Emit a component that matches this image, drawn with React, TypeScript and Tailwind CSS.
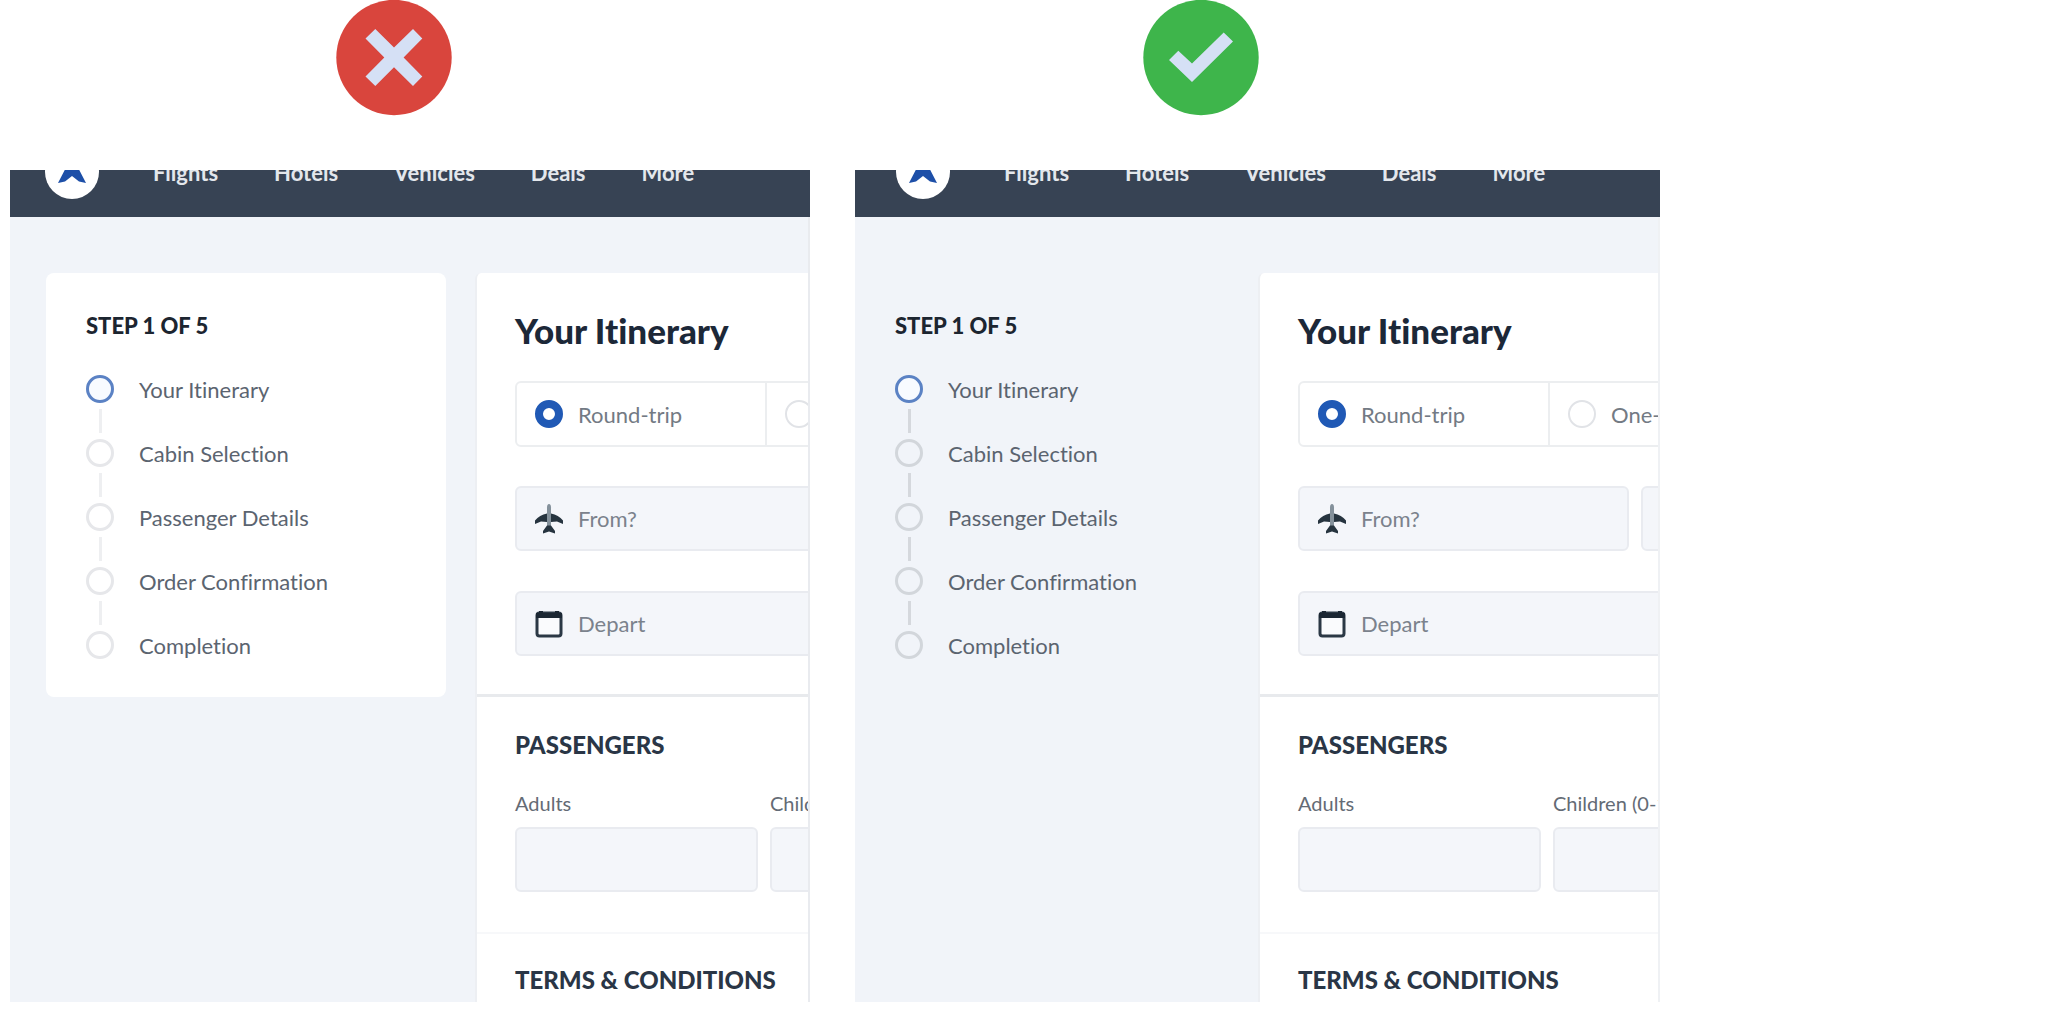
import React from "react";

const steps = ["Your Itinerary", "Cabin Selection", "Passenger Details", "Order Confirmation", "Completion"];
const links = ["Flights", "Hotels", "Vehicles", "Deals", "More"];

function Logo() {
  return (
    <a href="#" aria-label="Home" className="flex size-[54px] shrink-0 items-center justify-center rounded-full bg-white">
      <svg viewBox="0 0 30 32" className="h-8 w-[30px]" fill="#1d4fa8">
        <path d="M15 0L29 27l-7-1.500L15 20l-7 5.500L1 27z" />
      </svg>
    </a>
  );
}

function NavBar({ inset }: { inset: string }) {
  return (
    <header className="flex h-[47px] flex-col justify-end overflow-hidden bg-[#374354]">
      <nav className={"flex h-[90px] shrink-0 items-center gap-[54px] text-[22px] font-bold text-[#e3e7ec] " + inset}>
        <Logo />
        <ul className="flex gap-14">
          {links.map((l) => (
            <li key={l}>
              <a href="#">{l}</a>
            </li>
          ))}
        </ul>
      </nav>
    </header>
  );
}

function Steps({ tone, rail }: { tone: string; rail: string }) {
  return (
    <>
      <h2 className="text-[22px] leading-6 font-black text-[#1c2530]">STEP 1 OF 5</h2>
      <ol className="mt-[37px] flex flex-col gap-1.5">
        {steps.map((s, i) => (
          <React.Fragment key={s}>
            {i > 0 && <li aria-hidden="true" className={"ml-[13px] h-6 w-[3px] " + rail} />}
            <li className="flex h-7 items-center gap-[25px] text-[22px] text-[#5b6470]">
              <span className={"size-7 shrink-0 rounded-full border-3 " + (i === 0 ? "border-[#5b82c4] bg-[#f8fbff]" : tone)} />
              {s}
            </li>
          </React.Fragment>
        ))}
      </ol>
    </>
  );
}

function PlaneIcon() {
  return (
    <svg viewBox="0 0 28 30" className="h-[30px] w-7 shrink-0" aria-hidden="true">
      <path d="M14 0c1.300 0 2 1.500 2 3.500V23h-4V3.500C12 1.500 12.700 0 14 0z" fill="#84919b" />
      <path d="M12 9.500V18L6 17.500 0 20v-3.500C3 13 7 10.500 12 9.500zM16 9.500V18l6-.5 6 2.500v-3.500c-3-3.500-7-6-12-7z" fill="#26343f" />
      <path d="M12 21.500h4l4 5.500v2.500l-6-2-6 2V27z" fill="#26343f" />
    </svg>
  );
}

function CalendarIcon() {
  return (
    <svg viewBox="0 0 28 28" className="size-7 shrink-0" aria-hidden="true">
      <rect x="2" y="3" width="24" height="23" rx="2.500" fill="#fafbfd" stroke="#2b3845" strokeWidth="3" />
      <path d="M1 3h3V1h4v2h12V1h4v2h3v5H1z" fill="#1b2733" />
    </svg>
  );
}

function IconField({ id, label, icon, width }: { id: string; label: string; icon: React.ReactNode; width: string }) {
  return (
    <label htmlFor={id} className={"flex h-[65px] shrink-0 items-center gap-[15px] rounded-md border-2 border-[#e9ebf0] bg-[#f4f6fa] px-[18px] " + width}>
      {icon}
      <input id={id} placeholder={label} aria-label={label} className="w-40 bg-transparent text-[22px] text-[#7b828c] outline-none placeholder:text-[#7b828c]" />
    </label>
  );
}

function RadioOption({ name, label, checked }: { name: string; label: string; checked?: boolean }) {
  return (
    <label className="flex w-[248px] shrink-0 items-center gap-[15px] px-[18px] text-[22px] text-[#737a84]">
      <input
        type="radio"
        name={name}
        defaultChecked={checked}
        className="size-7 shrink-0 appearance-none rounded-full border-2 border-[#e1e3e7] bg-white checked:border-8 checked:border-[#2059b5]"
      />
      {label}
    </label>
  );
}

function Count({ id, label }: { id: string; label: string }) {
  return (
    <div className="flex w-[243px] shrink-0 flex-col gap-3">
      <label htmlFor={id} className="text-xl leading-6 whitespace-nowrap text-[#646b75]">
        {label}
      </label>
      <input id={id} className="h-[65px] w-full rounded-md border-2 border-[#e9ebf0] bg-[#f4f6fa] px-4 text-xl outline-none" />
    </div>
  );
}

function Itinerary({ id }: { id: string }) {
  return (
    <form className="min-w-0 flex-1 overflow-hidden rounded-tl-md border-l-2 border-[#edeff3] bg-white">
      <section className="border-b-3 border-[#e8eaed] pt-[37px] pb-[38px] pl-[38px]">
        <h1 className="text-[35px] leading-10 font-black whitespace-nowrap text-[#1c2838]">Your Itinerary</h1>
        <div className="mt-[31px] flex h-[66px] w-[760px] rounded-md border-2 border-[#eceef0]">
          <div className="flex border-r-2 border-[#eceef0]">
            <RadioOption name={id + "-trip"} label="Round-trip" checked />
          </div>
          <RadioOption name={id + "-trip"} label="One-way" />
        </div>
        <div className="mt-[39px] flex gap-3">
          <IconField id={id + "-from"} label="From?" icon={<PlaneIcon />} width="w-[331px]" />
          <IconField id={id + "-to"} label="To?" icon={<PlaneIcon />} width="w-[331px]" />
        </div>
        <div className="mt-10 flex">
          <IconField id={id + "-depart"} label="Depart" icon={<CalendarIcon />} width="w-[503px]" />
        </div>
      </section>
      <section className="border-b-2 border-[#f7f8fa] pt-[34px] pb-10 pl-[38px]">
        <h2 className="text-2xl leading-7 font-black text-[#2a3646]">PASSENGERS</h2>
        <div className="mt-8 flex gap-3">
          <Count id={id + "-adults"} label="Adults" />
          <Count id={id + "-children"} label="Children (0-12)" />
        </div>
      </section>
      <section className="pt-8 pb-2 pl-[38px]">
        <h2 className="text-2xl leading-7 font-black whitespace-nowrap text-[#2a3646]">TERMS &amp; CONDITIONS</h2>
      </section>
    </form>
  );
}

function Cross() {
  return (
    <svg viewBox="0 0 116 116" className="size-[116px]" role="img" aria-label="Avoid">
      <circle cx="58" cy="57.500" r="57.700" fill="#d9453d" />
      <path
        d="M29.500 38.500l9.800-9.500L58 47.500 77 29l9.300 9.500-18.700 19 18.700 19L77 86 58 67.300 39.300 86l-9.800-9.500 18.800-19z"
        fill="#d5e0f5"
      />
    </svg>
  );
}

function Check() {
  return (
    <svg viewBox="0 0 116 116" className="size-[116px]" role="img" aria-label="Prefer">
      <circle cx="58" cy="57.500" r="57.700" fill="#3eb54b" />
      <path d="M26 60l9.300-9.300L49 63.500l31.700-31 9.300 9L49 82z" fill="#d5e0f5" />
    </svg>
  );
}

export default function App() {
  return (
    <main className="grid grid-cols-[800fr_805fr_366fr] gap-x-[45px] pb-2.5 pl-2.5 font-['Lato',sans-serif] [font-variant-ligatures:none]">
      <section className="min-w-0">
        <div className="mb-[54px] pl-[326px]">
          <Cross />
        </div>
        <div className="overflow-hidden bg-[#f1f4f9]">
          <NavBar inset="pl-[35px]" />
          <div className="flex border-r-2 border-[#e9ebef] pt-14">
            <aside className="mr-[29px] ml-9 w-[400px] shrink-0 self-start rounded-lg bg-white px-10 pt-[41px] pb-[38px]">
              <Steps tone="border-[#e6e7ea]" rail="bg-[#eeeff1]" />
            </aside>
            <Itinerary id="boxed" />
          </div>
        </div>
      </section>
      <section className="min-w-0">
        <div className="mb-[54px] pl-72">
          <Check />
        </div>
        <div className="overflow-hidden bg-[#f1f4f9]">
          <NavBar inset="pl-[41px]" />
          <div className="flex border-r-2 border-[#eff1f4] pt-14">
            <aside className="w-[403px] shrink-0 pt-[41px] pl-10">
              <Steps tone="border-[#d2d6db]" rail="bg-[#d5d8dd]" />
            </aside>
            <Itinerary id="open" />
          </div>
        </div>
      </section>
    </main>
  );
}
